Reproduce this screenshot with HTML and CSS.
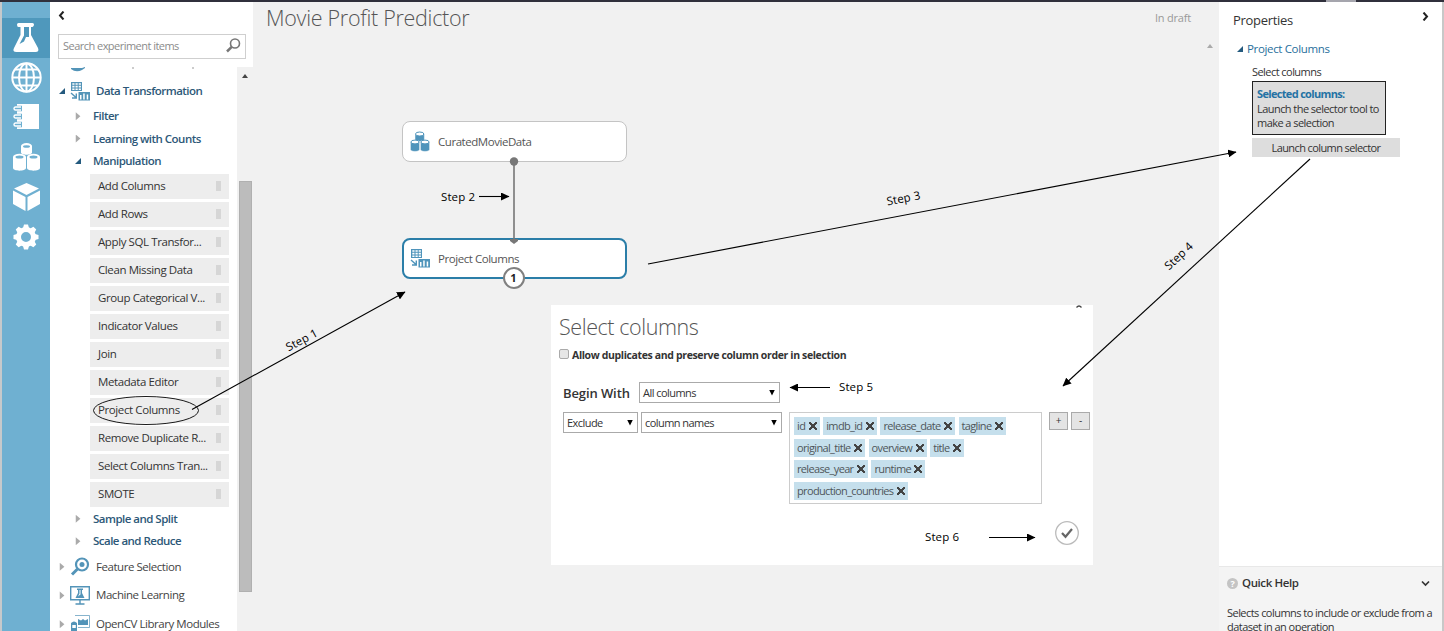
FILE: index.html
```html
<!DOCTYPE html>
<html lang="en">
<head>
<meta charset="utf-8">
<title>Movie Profit Predictor</title>
<link rel="stylesheet" href="styles.css">
</head>
<body>
<svg class="defs" width="0" height="0">
  <defs>
    <symbol id="ic-transform" viewBox="0 0 20 19">
      <path fill-rule="evenodd" d="M1 0h11v9H1zM2.300 1.200v1.600h2.200V1.200zM5.500 1.200v1.600h2.200V1.200zM8.700 1.200v1.600h2.200V1.200zM2.300 3.800v1.600h2.200V3.800zM5.500 3.800v1.600h2.200V3.800zM8.700 3.800v1.600h2.200V3.800zM2.300 6.400V8h2.200V6.400zM5.500 6.400V8h2.200V6.400zM8.700 6.400V8h2.200V6.400zM8.500 10H20v8.500H8.500zM10 13v4.500h1.500V13zM13.200 11.500v6h1.500v-6zM16.700 12.500v5h1.500v-5z"/>
      <path d="M1 11l5 4.500M6.300 11.500v4.500H2" fill="none" stroke="currentColor" stroke-width="1.400"/>
    </symbol>
    <symbol id="ic-data" viewBox="0 0 20 21">
      <path d="M5 3v5.500c0 2.600 9.400 2.600 9.400 0V3zM.4 11v7.500c0 2.600 9.200 2.600 9.200 0V11zM10.400 11v7.500c0 2.600 9.200 2.600 9.200 0V11z" stroke="#fff" stroke-width=".5"/>
      <g fill="#fff" stroke="currentColor"><ellipse cx="9.700" cy="3" rx="4.200" ry="2"/><ellipse cx="5" cy="11" rx="4.100" ry="1.900"/><ellipse cx="15" cy="11" rx="4.100" ry="1.900"/></g>
    </symbol>
  </defs>
</svg>
<div class="topbar"><i class="tab"></i></div>
<div class="app">
  <nav class="rail">
    <a class="rail-item active"><svg width="28" height="30" viewBox="0 0 28 30"><path fill-rule="evenodd" d="M5 1.500q0-1.500 1.500-1.500h14q1.500 0 1.500 1.500T20.500 4H19v8l7 13q1.500 4-2.500 4h-19Q0 29 2 25L8.500 12V4h-2Q5 4 5 1.500zM12 4v8.500L7.500 21l4.500-2.500 2-4.500h3V4z"/></svg></a>
    <a class="rail-item"><svg width="31" height="31" viewBox="0 0 31 31"><g fill="none" stroke="#fff" stroke-width="2"><circle cx="15.500" cy="15.500" r="14.200"/><ellipse cx="15.500" cy="15.500" rx="7.500" ry="14"/><path d="M15.500 1v29M1 15.500h29M4 7.500h23M4 23.500h23"/></g></svg></a>
    <a class="rail-item"><svg width="26" height="26" viewBox="0 0 26 26"><path d="M4 0h22v25H4z"/><g fill="none"><path d="M2 4.500h7M2 12.500h7M2 20.500h7" stroke="#6fb0d1" stroke-width="5.500"/><path d="M8 3H2.500a1.500 1.500 0 000 3H8M8 11H2.500a1.500 1.500 0 000 3H8M8 19H2.500a1.500 1.500 0 000 3H8" stroke="#fff" stroke-width="1.400"/></g></svg></a>
    <a class="rail-item"><svg width="27" height="28" viewBox="0 0 27 28"><g><path d="M8 3v6.500c0 3 11 3 11 0V3zM0 14v11c0 3.500 13 3.500 13 0V14zM14 14v11c0 3.500 13 3.500 13 0V14z"/><ellipse cx="13.500" cy="3" rx="5.500" ry="3"/><ellipse cx="6.500" cy="14" rx="6.500" ry="3.300"/><ellipse cx="20.500" cy="14" rx="6.500" ry="3.300"/></g><g fill="#6fb0d1"><ellipse cx="13.500" cy="3.500" rx="3.500" ry="1.300"/><ellipse cx="6.500" cy="14" rx="4" ry="1.500"/><ellipse cx="20.500" cy="14" rx="4" ry="1.500"/></g></svg></a>
    <a class="rail-item"><svg width="27" height="28" viewBox="0 0 27 28"><path d="M13.500 0L26 5.500 13.500 12 1 5.500zM0 7.500L12.500 14v14L0 21zM27 7.500L14.500 14v14L27 21z"/></svg></a>
    <a class="rail-item"><svg width="26" height="26" viewBox="-13 -13 26 26"><circle r="7.500" fill="none" stroke="#fff" stroke-width="5"/><path d="M-3-9l1-3.500h4L3-9zM-3 9l1 3.500h4L3 9z"/><path d="M-3-9l1-3.500h4L3-9zM-3 9l1 3.500h4L3 9z" transform="rotate(45)"/><path d="M-3-9l1-3.500h4L3-9zM-3 9l1 3.500h4L3 9z" transform="rotate(90)"/><path d="M-3-9l1-3.500h4L3-9zM-3 9l1 3.500h4L3 9z" transform="rotate(135)"/></svg></a>
  </nav>
  <aside class="palette">
    <svg class="collapse" width="7" height="9" viewBox="0 0 7 9"><path d="M5.500 .5L2 4.500l3.500 4" fill="none" stroke="#222" stroke-width="2"/></svg>
    <div class="search"><span>Search experiment items</span><svg width="15" height="15" viewBox="0 0 15 15"><g fill="none" stroke="#777"><circle cx="9" cy="5.500" r="4.500" stroke-width="1.600"/><path d="M5.700 8.800L1 13.500" stroke-width="2.500"/></g></svg></div>
    <div class="treewrap">
      <div class="tree">
        <div class="cut"><svg width="160" height="6" viewBox="0 0 160 6"><path d="M1 1h11l3-1v1l-3 2q-6 3-11-1z" fill="#5394b8"/><path d="M62 1h2M122 1h2" stroke="#999"/></svg></div>
        <div class="row root open"><i class="tri down"></i><svg width="20" height="19"><use href="#ic-transform"/></svg><b>Data Transformation</b></div>
        <div class="row sub"><i class="tri"></i><b>Filter</b></div>
        <div class="row sub"><i class="tri"></i><b>Learning with Counts</b></div>
        <div class="row sub"><i class="tri down"></i><b>Manipulation</b></div>
        <div class="modules">
          <div class="module">Add Columns</div>
          <div class="module">Add Rows</div>
          <div class="module">Apply SQL Transfor...</div>
          <div class="module">Clean Missing Data</div>
          <div class="module">Group Categorical V...</div>
          <div class="module">Indicator Values</div>
          <div class="module">Join</div>
          <div class="module">Metadata Editor</div>
          <div class="module">Project Columns</div>
          <div class="module">Remove Duplicate R...</div>
          <div class="module">Select Columns Tran...</div>
          <div class="module">SMOTE</div>
        </div>
        <div class="row sub"><i class="tri"></i><b>Sample and Split</b></div>
        <div class="row sub"><i class="tri"></i><b>Scale and Reduce</b></div>
        <div class="row root"><i class="tri"></i><svg width="20" height="19" viewBox="0 0 20 19"><circle cx="12" cy="7.500" r="6" fill="none" stroke="currentColor" stroke-width="2.200"/><circle cx="12" cy="7.500" r="2.500"/><path d="M7.500 12L2 17.500" stroke="currentColor" stroke-width="3"/></svg><span>Feature Selection</span></div>
        <div class="row root"><i class="tri"></i><svg width="20" height="19" viewBox="0 0 20 19"><path d="M.7.700h18.600v13H.7zM10 14v4M5.500 18h9" fill="none" stroke="currentColor" stroke-width="1.400"/><path d="M7 2.500h6V4h-1v3l2.500 5h-9L8 7V4H7z"/><path d="M9.500 4v3.500L8 10.500l2.500-2V4z" fill="#fff"/></svg><span>Machine Learning</span></div>
        <div class="row root"><i class="tri"></i><svg width="20" height="19" viewBox="0 0 20 19"><path d="M5 .5h14.500v12H8" fill="none" stroke="currentColor" stroke-width=".7"/><path d="M8 10V4l3 1.500L13 4l2 1.500L18 4v6zM1 8q3-3 6 0v11H1z"/><path d="M2.300 10h3.500v3H2.300z" fill="#fff"/></svg><span>OpenCV Library Modules</span></div>
      </div>
      <div class="scroll"><i class="up"></i><i class="thumb"></i></div>
    </div>
  </aside>
  <main class="canvas">
    <header class="head"><h1>Movie Profit Predictor</h1><span>In draft</span></header>
    <i class="canvas-up"></i>
    <svg class="link" width="12" height="90" viewBox="0 0 12 90"><path d="M6 4v78" stroke="#777" stroke-width="1.600"/><circle cx="6" cy="4.500" r="4.200" fill="#777"/><path d="M2 82h8v2l-4 3-4-3z" fill="#777"/></svg>
    <div class="node n1"><svg width="20" height="21"><use href="#ic-data"/></svg>CuratedMovieData</div>
    <div class="node n2"><svg width="20" height="19"><use href="#ic-transform"/></svg>Project Columns</div>
    <div class="port">1</div>
    <section class="dialog">
      <svg class="dlg-up" width="6" height="3" viewBox="0 0 6 3"><path d="M.5 2.500Q3-.5 5.500 2.500" fill="none" stroke="#444" stroke-width="1.300"/></svg>
      <h2>Select columns</h2>
      <label class="dup"><i class="check"></i>Allow duplicates and preserve column order in selection</label>
      <div class="begin"><b>Begin With</b><span class="select wide">All columns<i></i></span></div>
      <div class="rule">
        <span class="select short">Exclude<i></i></span><span class="select wide">column names<i></i></span>
        <div class="chips">
          <div><span class="chip">id<i></i></span><span class="chip">imdb_id<i></i></span><span class="chip">release_date<i></i></span><span class="chip">tagline<i></i></span></div>
          <div><span class="chip">original_title<i></i></span><span class="chip">overview<i></i></span><span class="chip">title<i></i></span></div>
          <div><span class="chip">release_year<i></i></span><span class="chip">runtime<i></i></span></div>
          <div><span class="chip">production_countries<i></i></span></div>
        </div>
        <span class="btn">+</span><span class="btn">-</span>
      </div>
      <div class="confirm"><svg width="26" height="26" viewBox="0 0 26 26"><circle cx="13" cy="13" r="11.300" fill="#fff" stroke="#bbb" stroke-width="1.300"/><path d="M8 13l3.500 3.800L18 9" fill="none" stroke="#666" stroke-width="2.200"/></svg></div>
    </section>
  </main>
  <aside class="props">
    <div class="props-head"><span>Properties</span><svg width="7" height="9" viewBox="0 0 7 9"><path d="M1.500 .5L5 4.500l-3.500 4" fill="none" stroke="#222" stroke-width="2"/></svg></div>
    <div class="group"><i class="tri down"></i>Project Columns</div>
    <div class="field">
      <div class="label">Select columns</div>
      <div class="selected"><b>Selected columns:</b><br>Launch the selector tool to<br>make a selection</div>
      <div class="launch">Launch column selector</div>
    </div>
    <div class="help">
      <div class="help-head"><i>?</i><b>Quick Help</b><svg width="9" height="7" viewBox="0 0 9 7"><path d="M1 1.500L4.500 5 8 1.500" fill="none" stroke="#333" stroke-width="1.700"/></svg></div>
      <p>Selects columns to include or exclude from a<br>dataset in an operation</p>
    </div>
  </aside>
</div>
<svg class="notes" width="1444" height="631" viewBox="0 0 1444 631">
  <defs><marker id="arrow" markerUnits="userSpaceOnUse" markerWidth="9" markerHeight="8" refX="8" refY="4" orient="auto"><path d="M0 0l8.500 4L0 8z"/></marker></defs>
  <g fill="none" stroke="#000" stroke-width="1.100">
    <ellipse cx="146" cy="410.500" rx="52.500" ry="14" stroke-width=".9"/>
    <g marker-end="url(#arrow)">
      <path d="M192 409.500L405 292"/><path d="M479 196.500h30"/><path d="M648 264L1236 152"/>
      <path d="M1310 159L1063 386"/><path d="M830 387.500h-40"/><path d="M989 537.500h46"/>
    </g>
  </g>
  <g class="steps">
    <text transform="translate(288.500 351.500) rotate(-28)" textLength="34">Step 1</text>
    <text x="441" y="201" textLength="34">Step 2</text>
    <text transform="translate(887.500 205.500) rotate(-11)" textLength="34">Step 3</text>
    <text transform="translate(1169 270.500) rotate(-43)" textLength="34">Step 4</text>
    <text x="839" y="391" textLength="34">Step 5</text>
    <text x="925" y="541" textLength="34">Step 6</text>
  </g>
</svg>
</body>
</html>
```

FILE: styles.css
```css
* { box-sizing: border-box; }
body { margin: 0; width: 1444px; height: 631px; overflow: hidden; position: relative; background: #f1f1f1; color: #333; font: 11px/14px "Open Sans", "Noto Sans", sans-serif; letter-spacing: -.55px; }
svg { display: block; flex: none; }
i { font-style: normal; flex: none; }
b { font-weight: 600; }
.defs { position: absolute; }
.topbar { height: 2px; background: #30303c; display: flex; }
.tab { width: 30px; height: 2px; margin-left: 1326px; background: #a5a5ad; }
.app { display: flex; height: 629px; border-left: 2px solid #c6c9cb; border-right: 2px solid #c8c8c8; }

.rail { width: 48px; background: #6fb0d1; padding-top: 16px; flex: none; }
.rail-item { height: 39.800px; display: flex; align-items: center; justify-content: center; fill: #fff; }
.rail-item.active { background: #4f98bc; }

.palette { width: 203px; background: #fff; flex: none; display: flex; flex-direction: column; }
.collapse { margin: 9px 0 0 8px; }
.search { margin: 14px 7px 0 8px; height: 25px; flex: none; border: 1px solid #cfcfcf; display: flex; align-items: center; justify-content: space-between; padding: 0 4px 2px; color: #8b8b8b; letter-spacing: -.53px; }
.treewrap { display: flex; flex: 1; min-height: 0; margin-top: 8px; }
.tree { width: 187px; overflow: hidden; }
.cut { height: 10px; padding-left: 20px; }
.row { display: flex; align-items: center; height: 22.400px; color: #2d5878; font-size: 11.500px; letter-spacing: -.45px; }
.row svg { color: #5394b8; fill: #5394b8; margin-right: 6px; }
.row b { letter-spacing: -.52px; }
.root { height: 28.700px; padding-left: 9px; color: #444; }
.root.open { color: #2d5878; height: 28px; }
.root .tri { margin-right: 5px; }
.sub { padding-left: 25px; }
.sub .tri { margin-right: 12px; }
.tri { width: 6px; height: 8px; background: #aaa; clip-path: polygon(12% 0, 90% 50%, 12% 100%); }
.tri.down { height: 6px; background: #245a7e; clip-path: polygon(100% 0, 100% 100%, 0 100%); }
.modules { display: flex; flex-direction: column; gap: 3px; padding: 1.500px 8px 1px 40px; }
.module { height: 25px; background: #ededed; display: flex; align-items: center; justify-content: space-between; padding: 0 8px 1px 8px; color: #333; font-size: 11.500px; letter-spacing: -.4px; white-space: nowrap; }
.module::after { content: ""; width: 5px; height: 10px; background: #d6d6d6; }
.scroll { width: 16px; background: #f1f1f1; padding: 7px 1px 0 2px; }
.up { display: block; width: 6px; height: 4px; margin-left: 3px; background: #444; clip-path: polygon(50% 0, 100% 100%, 0 100%); }
.thumb { display: block; height: 411px; margin-top: 103px; background: #bcbcbc; border: 1px solid #b0b0b0; }

.canvas { width: 966px; flex: none; position: relative; }
.head { display: flex; justify-content: space-between; padding: 2px 28px 0 13px; color: #999; letter-spacing: -.2px; }
.head span { padding-top: 7px; }
h1, h2 { margin: 0; font-weight: 300; font-size: 21.500px; line-height: 27px; color: #555; letter-spacing: -.29px; }
h2 { line-height: 27px; letter-spacing: -.42px; }
.canvas-up { position: absolute; left: 954px; top: 42px; width: 6px; height: 4px; background: #aaa; clip-path: polygon(50% 0, 100% 100%, 0 100%); }
.node { position: absolute; left: 149px; width: 225px; height: 41px; background: #fff; border: 1px solid #c4c4c4; border-radius: 8px; display: flex; align-items: center; gap: 8px; padding-left: 7px; color: #555; font-size: 11.500px; letter-spacing: -.45px; }
.node svg { color: #4f94bb; fill: #4f94bb; }
.n1 { top: 119px; }
.n2 { top: 236px; border: 2px solid #2b7ea8; padding-left: 6px; }
.link { position: absolute; left: 255px; top: 155px; z-index: 1; }
.port { position: absolute; left: 249.500px; top: 265px; width: 22px; height: 22px; border: 2px solid #808080; border-radius: 50%; background: #fff; text-align: center; font-weight: 700; line-height: 18px; color: #222; letter-spacing: 0; }

.dialog { position: absolute; left: 298px; top: 303px; width: 542px; height: 260px; background: #fff; padding: 8px 2px 0 8px; }
.dlg-up { position: absolute; left: 525px; top: 0; }
.dup { display: flex; align-items: center; height: 14px; margin-top: 8px; font-weight: 700; font-size: 10.500px; letter-spacing: -.36px; gap: 3px; }
.check { width: 10px; height: 10px; border: 1px solid #aaa; border-radius: 2px; background: #e6e6e6; margin-top: -3px; }
.begin { display: flex; align-items: center; gap: 9px; padding-left: 4px; margin-top: 20px; font-size: 13px; letter-spacing: -.1px; }
.begin b { width: 67px; white-space: nowrap; }
.select { flex: none; height: 21px; border: 1px solid #aaa; display: flex; align-items: center; justify-content: space-between; padding: 0 4px 0 3px; font-size: 11px; letter-spacing: -.55px; }
.select i { width: 6px; height: 6px; background: #000; clip-path: polygon(0 0, 100% 0, 50% 100%); }
.wide { width: 141px; }
.short { width: 75px; margin-right: 3px; }
.rule { display: flex; align-items: flex-start; padding-left: 4px; margin-top: 9px; }
.chips { flex: none; width: 253px; height: 92px; margin: 0 7px 0 7px; border: 1px solid #ccc; padding: 4px; display: flex; flex-direction: column; gap: 3.600px; }
.chips div { display: flex; gap: 3.500px; }
.chip { height: 18px; background: #c5dfec; display: flex; align-items: center; padding: 0 3px; gap: 3.500px; color: #4f565a; letter-spacing: -.65px; }
.chip i { width: 8px; height: 8px; background: linear-gradient(45deg, transparent 40%, #444 40%, #444 60%, transparent 60%), linear-gradient(-45deg, transparent 40%, #444 40%, #444 60%, transparent 60%); }
.btn { flex: none; width: 19px; height: 18px; margin-right: 3px; border: 1px solid #aaa; background: #e4e4e4; text-align: center; line-height: 15px; font-size: 10px; letter-spacing: 0; }
.confirm { display: flex; justify-content: flex-end; padding: 16px 11px 0; }

.props { width: 223px; flex: none; background: #fff; display: flex; flex-direction: column; }
.props-head { display: flex; justify-content: space-between; padding: 10px 13px 0 14px; font-size: 13px; line-height: 16px; letter-spacing: -.3px; }
.group { display: flex; align-items: center; gap: 4px; padding-left: 18px; margin-top: 14px; color: #286f9c; font-size: 11.500px; font-weight: 500; letter-spacing: -.35px; }
.field { padding-left: 33px; margin-top: 8px; }
.label { line-height: 16px; }
.selected { width: 134px; margin-top: 1px; height: 54px; border: 1px solid #222; background: #ddd; padding: 5px 4px; line-height: 14.500px; white-space: nowrap; letter-spacing: -.55px; }
.selected b { color: #2472a4; font-weight: 700; letter-spacing: -.67px; }
.launch { width: 148px; height: 19px; margin-top: 3px; background: #ddd; text-align: center; line-height: 19px; letter-spacing: -.6px; }
.help { margin-top: auto; height: 65px; background: #f4f4f4; border-top: 1px solid #e8e8e8; padding: 9px 0 0 8px; color: #333; }
.help-head { display: flex; align-items: center; gap: 4px; font-size: 11.500px; letter-spacing: -.4px; }
.help-head i { width: 11px; height: 11px; border-radius: 50%; background: #c4c4c4; color: #fff; font-size: 9px; line-height: 11px; text-align: center; font-weight: 700; }
.help-head svg { margin-left: auto; margin-right: 12px; }
.help p { margin: 16px 0 0; line-height: 14px; white-space: nowrap; letter-spacing: -.54px; }
.notes { position: absolute; left: 0; top: 0; z-index: 5; pointer-events: none; }
.steps { font-size: 11.500px; fill: #000; letter-spacing: 0; }
```
